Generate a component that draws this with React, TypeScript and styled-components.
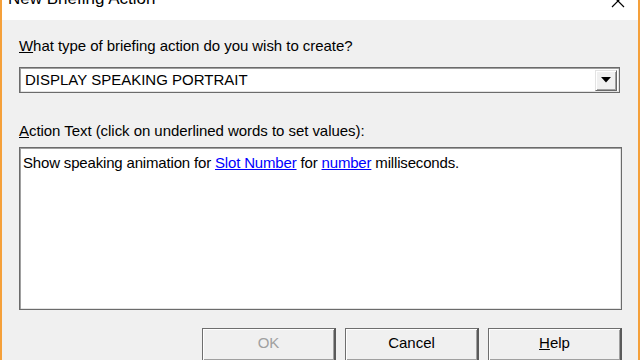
import React from "react";
import styled, { createGlobalStyle } from "styled-components";

const Global = createGlobalStyle`
  html, body { margin: 0; padding: 0; background: #f0f0f0; overflow: hidden; }
  * { box-sizing: border-box; }
`;

const Window = styled.div`
  width: 640px;
  height: 360px;
  display: flex;
  flex-direction: column;
  border-left: 2px solid #f5a03a;
  border-right: 2px solid #f5a03a;
  background: #f0f0f0;
  overflow: hidden;
  font-family: "Liberation Sans", Arial, sans-serif;
  font-size: 15px;
  color: #000;
`;

const TitleBar = styled.div`
  height: 20px;
  flex: none;
  background: #ffffff;
  display: flex;
  align-items: flex-start;
  padding-left: 6px;
  padding-right: 13px;
`;

const TitleText = styled.div`
  flex: 1;
  margin-top: -11px;
  font-size: 17px;
  line-height: 20px;
  color: #000;
  white-space: nowrap;
`;

const CloseIcon = styled.svg`
  margin-top: -6px;
  flex: none;
`;

const Body = styled.div`
  flex: 1;
  display: flex;
  flex-direction: column;
  padding: 0 16px 0 17px;
`;

const Label = styled.div<{ $top: number }>`
  margin-top: ${(p) => p.$top}px;
  line-height: 16px;
  height: 16px;
  white-space: nowrap;
  letter-spacing: -0.05px;
`;

const Combo = styled.div`
  margin-top: 13px;
  margin-right: 2px;
  height: 26px;
  background: #fff;
  border: 1px solid #6b6b6b;
  box-shadow: inset 1px 1px 0 #a0a0a0, inset -1px -1px 0 #e3e3e3;
  display: flex;
  align-items: center;
  padding: 2px 2px 2px 5px;
`;

const ComboText = styled.div`
  flex: 1;
  line-height: 16px;
  white-space: nowrap;
`;

const DropButton = styled.div`
  width: 22px;
  height: 21px;
  flex: none;
  background: #f0f0f0;
  border-top: 1px solid #e3e3e3;
  border-left: 1px solid #e3e3e3;
  border-right: 1px solid #696969;
  border-bottom: 1px solid #696969;
  box-shadow: inset 1px 1px 0 #ffffff, inset -1px -1px 0 #a0a0a0;
  display: flex;
  align-items: center;
  justify-content: center;
`;

const TextArea = styled.div`
  margin-top: 8px;
  height: 163px;
  background: #fff;
  border: 1px solid #6b6b6b;
  box-shadow: inset 1px 1px 0 #a0a0a0, inset -1px -1px 0 #e3e3e3;
  padding: 7px 3px;
  line-height: 16px;
  white-space: nowrap;
  letter-spacing: -0.17px;
`;

const Link = styled.span`
  color: #0000ff;
  text-decoration: underline;
  cursor: pointer;
`;

const Mnemonic = styled.span`
  text-decoration: underline;
`;

const ButtonRow = styled.div`
  margin-top: 18px;
  display: flex;
  justify-content: flex-end;
  gap: 9px;
`;

const Button = styled.div<{ $disabled?: boolean }>`
  width: 134px;
  height: 34px;
  flex: none;
  background: #f0f0f0;
  border-top: 1px solid #6e6e6e;
  border-left: 1px solid #6e6e6e;
  border-right: 2px solid #5a5a5a;
  border-bottom: 2px solid #5a5a5a;
  box-shadow: inset 1px 1px 0 #ffffff, inset -1px -1px 0 #a0a0a0;
  display: flex;
  align-items: center;
  justify-content: center;
  padding-bottom: 4px;
  color: ${(p) => (p.$disabled ? "#a0a0a0" : "#000")};
`;

export default function App() {
  return (
    <>
      <Global />
      <Window>
        <TitleBar>
          <TitleText>New Briefing Action</TitleText>
          <CloseIcon width="14" height="14" viewBox="0 0 14 14">
            <path d="M1 1 L13 13 M13 1 L1 13" stroke="#000" strokeWidth="1.2" fill="none" />
          </CloseIcon>
        </TitleBar>
        <Body>
          <Label $top={18}>
            <Mnemonic>W</Mnemonic>hat type of briefing action do you wish to create?
          </Label>
          <Combo>
            <ComboText>DISPLAY SPEAKING PORTRAIT</ComboText>
            <DropButton>
              <svg width="10" height="6" viewBox="0 0 10 6">
                <path d="M0 0 H10 L5 5.5 Z" fill="#000" />
              </svg>
            </DropButton>
          </Combo>
          <Label $top={30}>
            <Mnemonic>A</Mnemonic>ction Text (click on underlined words to set values):
          </Label>
          <TextArea>
            Show speaking animation for <Link>Slot Number</Link> for <Link>number</Link> milliseconds.
          </TextArea>
          <ButtonRow>
            <Button $disabled>OK</Button>
            <Button>Cancel</Button>
            <Button>
              <span>
                <Mnemonic>H</Mnemonic>elp
              </span>
            </Button>
          </ButtonRow>
        </Body>
      </Window>
    </>
  );
}
